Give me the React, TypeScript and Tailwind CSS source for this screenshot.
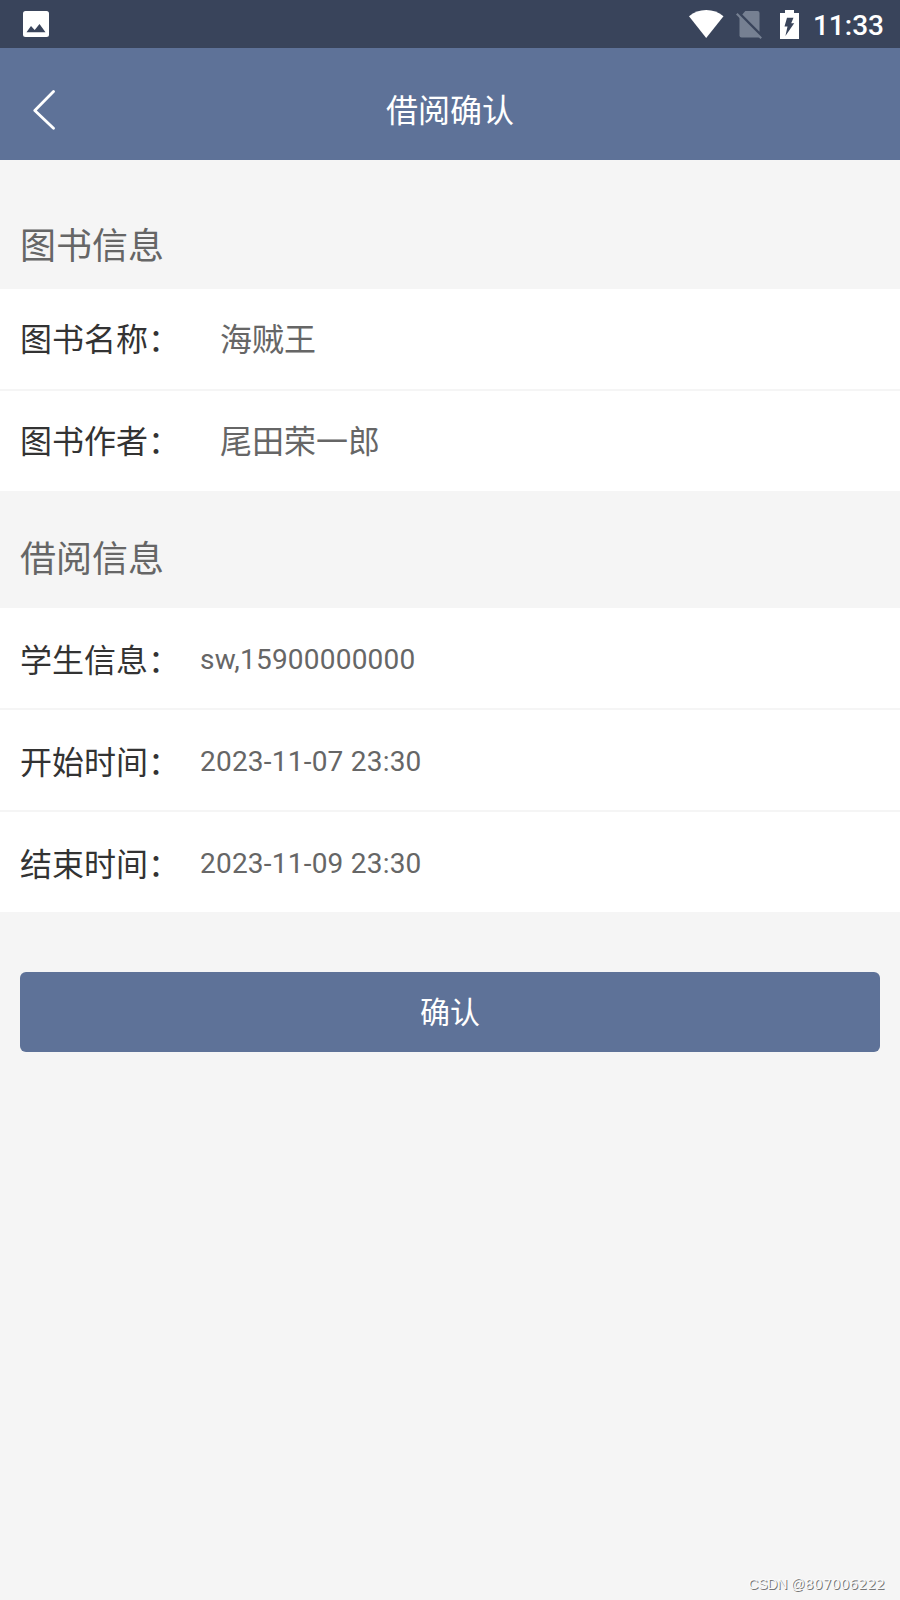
import { clsx } from "clsx"

type InfoRowProps = {
  label: string
  value: string
  cjk?: boolean
}

const bookRows: InfoRowProps[] = [
  { label: "图书名称：", value: "海贼王", cjk: true },
  { label: "图书作者：", value: "尾田荣一郎", cjk: true },
]

const borrowRows: InfoRowProps[] = [
  { label: "学生信息：", value: "sw,15900000000" },
  { label: "开始时间：", value: "2023-11-07 23:30" },
  { label: "结束时间：", value: "2023-11-09 23:30" },
]

function StatusBar() {
  return (
    <div className="flex h-12 shrink-0 items-center bg-[#39445b] pr-4 pl-[23px] text-white">
      <svg className="h-[26px] w-[26px]" viewBox="0 0 26 26">
        <rect width="26" height="26" rx="2.5" fill="#fff" />
        <path d="M3.5 21.2L8 15l3.7 4L16.5 13l6 8.2z" fill="#39445b" />
      </svg>
      <svg className="ml-auto h-[28px] w-[35px]" viewBox="0 0 35 28">
        <path d="M0 6.2Q7.3 0 17.2 0T34.5 6.2L17.2 28z" fill="#fff" />
      </svg>
      <svg className="mt-[2px] ml-[12px] h-[30px] w-[27px]" viewBox="0 0 27 30">
        <path d="M9.3 1H21.5q2 0 2 2V21.8L6.3 4.6z" fill="#768092" />
        <path d="M3.5 6.5L24 27q-.8.5-2 .5H5.5q-2 0-2-2z" fill="#768092" />
        <path d="M.8 3.8L25.2 28.2" stroke="#768092" strokeWidth="2.2" />
      </svg>
      <svg className="ml-[17px] h-[29px] w-[19px]" viewBox="0 0 19 29">
        <path d="M5 0h9v3h5v26H0V3h5z" fill="#fff" />
        <path d="M7 7.8h6.5l-2.3 5.4h3L5.4 26 7.5 16.5H4.5z" fill="#39445b" />
      </svg>
      <span className="ml-[14px] pt-[4px] text-[28px] leading-none font-medium">11:33</span>
    </div>
  )
}

function Header() {
  return (
    <div className="grid h-28 shrink-0 grid-cols-3 items-center bg-[#5e7298] pt-[13px] text-white">
      <svg className="-mt-[2px] ml-[33px] h-10 w-[23px]" viewBox="0 0 23 40" fill="none" stroke="#fff" strokeWidth="2.8" strokeLinecap="round" strokeLinejoin="round">
        <path d="M20.5 1.5L1.8 20.4 20.5 38.2" />
      </svg>
      <h1 className="text-center text-[32px] leading-10">借阅确认</h1>
    </div>
  )
}

function InfoRow({ label, value, cjk }: InfoRowProps) {
  return (
    <div className="flex h-[100px] items-center bg-white px-5">
      <span className={clsx("shrink-0 text-[32px] leading-10 text-[#333]", cjk ? "w-[200px] pt-[2px]" : "w-[180px] pt-[6px]")}>{label}</span>
      <span className={clsx("text-[#666]", cjk ? "pt-[2px] text-[32px] leading-10" : "pt-[4px] text-[28px] leading-10 tracking-[0.22px]")}>{value}</span>
    </div>
  )
}

function InfoList({ rows }: { rows: InfoRowProps[] }) {
  return (
    <div className="flex flex-col gap-[2px]">
      {rows.map((row) => (
        <InfoRow key={row.label} {...row} />
      ))}
    </div>
  )
}

export default function App() {
  return (
    <div className="flex h-[1600px] w-[900px] flex-col overflow-hidden bg-[#f5f5f5] font-['Roboto','Noto_Sans_CJK_SC',sans-serif]">
      <StatusBar />
      <Header />

      <h2 className="h-[129px] px-5 pt-[64px] text-[36px] leading-[46px] text-[#666]">图书信息</h2>
      <InfoList rows={bookRows} />

      <h2 className="h-[117px] px-5 pt-[46px] text-[36px] leading-[46px] text-[#666]">借阅信息</h2>
      <InfoList rows={borrowRows} />

      <button className="mx-5 mt-[60px] flex h-20 items-center justify-center rounded-md bg-[#5e7298] pt-[2px] text-[30px] leading-10 text-white">
        确认
      </button>

      <div className="mt-auto pr-[15px] pb-[6px] text-right font-['Liberation_Sans',sans-serif] text-[14px] leading-5 text-[#fafafa] [text-shadow:1px_1px_0_#777]">
        <span className="tracking-[-0.2px]">CSDN @</span>
        <span className="font-['DejaVu_Sans',sans-serif]">807006222</span>
      </div>
    </div>
  )
}
